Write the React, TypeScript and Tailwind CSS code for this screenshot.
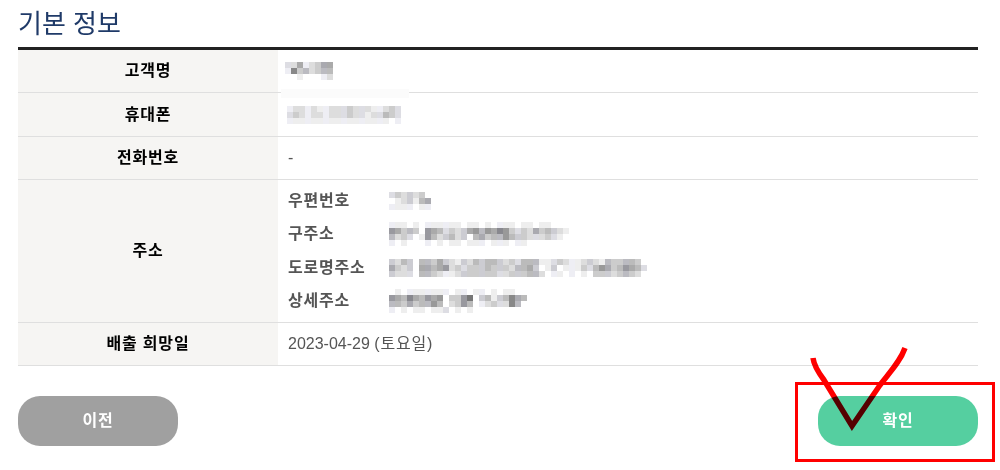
import type { ReactNode } from "react";

const FONT = "font-['Liberation_Sans','Noto_Sans_CJK_KR',sans-serif]";

// hidden personal data in the original: gray levels per 6px cell (0 = black, f = white)
const NAME = ["ddaedcaa", "e8cbdcbb", "ffefffed"];
const PHONE = [
  "eddedeedddcdddeedcd",
  "dcdeddedddcddeddbcd",
  "eeeeeeeeeeeeeeeeefe",
];
const ZIP = ["dcdcdcff", "fedcebaf", "eeeefeef"];
const OLD_ADDR = [
  "eeefefeeeeeefeefefeeefeefeefff",
  "9acbcf9abdcdca9b9a89cdcdacbcde",
  "bdcdfe9bdcbdcfbacbb9bccdddcdef",
  "efefffefefeefeeefeeefeefffffff",
];
const ROAD_ADDR = [
  "cdbcfbbcacdecdbcbbcdcdbbbeedcdeedcdebccbbcf",
  "acdcfaaba9dcdcccbcccdbbacfecfeeecdb9acb9abd",
  "cdddfbbcdeedccccccddcccbbdfeefefefcccdcbcdf",
];
const DETAIL = [
  "fefeeeeeeefeefeefefeeff",
  "9ab8ab9a9fcc97fcbecb8ab",
  "bbcacbb9bfdc9bfedcdd8bf",
  "efefeefeedfefefffffffff",
];

function Mosaic({ rows }: { rows: string[] }) {
  return (
    <div className="flex flex-col">
      {rows.map((row, r) => (
        <div key={r} className="flex">
          {row.split("").map((c, i) => {
            const g = parseInt(c, 16) * 17;
            return (
              <div
                key={i}
                className="h-[6px] w-[6px]"
                style={{ backgroundColor: `rgb(${g},${g},${g + (g > 120 && i % 3 === 0 ? 6 : 0)})` }}
              />
            );
          })}
        </div>
      ))}
    </div>
  );
}

function Row({
  label,
  h,
  children,
}: {
  label: string;
  h: string;
  children: ReactNode;
}) {
  return (
    <div className={`flex border-b border-[#dfdfdf] ${h}`}>
      <div className="flex w-[260px] shrink-0 items-center justify-center bg-[#f6f5f3] text-[16px] font-bold tracking-[0.8px] text-black">
        {label}
      </div>
      <div className="flex flex-1 items-center px-[10px] text-[16px] text-[#555]">
        {children}
      </div>
    </div>
  );
}

function AddrLine({ label, rows }: { label: string; rows: string[] }) {
  return (
    <div className="flex h-[33.5px] items-center">
      <div className="w-[101px] shrink-0 text-[16px] font-bold tracking-[0.8px] text-[#555]">{label}</div>
      <Mosaic rows={rows} />
    </div>
  );
}

function Annotation() {
  return (
    <>
      <div className="absolute left-[795px] top-[382px] h-[80px] w-[200px] border-[3px] border-[#ff0000]" />
      <svg
        className="absolute left-[800px] top-[340px] mix-blend-multiply"
        width="120"
        height="100"
        viewBox="0 0 120 100"
        fill="none"
      >
        <path
          d="M13 18 C14 26 18 32 24 40 L52 86 L80 45 C90 32 100 22 105 8"
          stroke="#ff0000"
          strokeWidth="5.5"
          strokeLinejoin="miter"
        />
      </svg>
    </>
  );
}

export default function App() {
  return (
    <div className={`relative h-[470px] w-[1000px] overflow-hidden bg-white ${FONT}`}>
      <div className="w-[960px] ml-[18px]">
        <h2 className="flex h-[47px] items-center pt-[2px] text-[26px] font-normal text-[#1f3a68]">
          기본 정보
        </h2>
        <div className="border-t-[3px] border-[#222]">
          <Row label="고객명" h="h-[43px]">
            <div className="-ml-[3px]">
              <Mosaic rows={NAME} />
            </div>
          </Row>
          <Row label="휴대폰" h="h-[44px]">
            <div className="-ml-[1px]">
              <Mosaic rows={PHONE} />
            </div>
          </Row>
          <Row label="전화번호" h="h-[43px]">
            -
          </Row>
          <Row label="주소" h="h-[143px]">
            <div className="flex flex-col">
              <AddrLine label="우편번호" rows={ZIP} />
              <AddrLine label="구주소" rows={OLD_ADDR} />
              <AddrLine label="도로명주소" rows={ROAD_ADDR} />
              <AddrLine label="상세주소" rows={DETAIL} />
            </div>
          </Row>
          <Row label="배출 희망일" h="h-[43px]">
            <span>
              2023-04-29 <span className="tracking-[0.8px]">(토요일)</span>
            </span>
          </Row>
        </div>
        <div className="mt-[30px] flex justify-between">
          <button
            type="button"
            className="h-[50px] w-[160px] rounded-[22px] bg-[#a0a0a0] text-[16px] font-bold tracking-[0.8px] text-white"
          >
            이전
          </button>
          <button
            type="button"
            className="h-[50px] w-[160px] rounded-[22px] bg-[#55cfa0] text-[16px] font-bold tracking-[0.8px] text-white"
          >
            확인
          </button>
        </div>
      </div>
      {/* leftover smear from the editing over the first row's border */}
      <div className="absolute left-[281px] top-[89px] h-[9px] w-[128px] bg-[#fbfbfb]" />
      <Annotation />
    </div>
  );
}
